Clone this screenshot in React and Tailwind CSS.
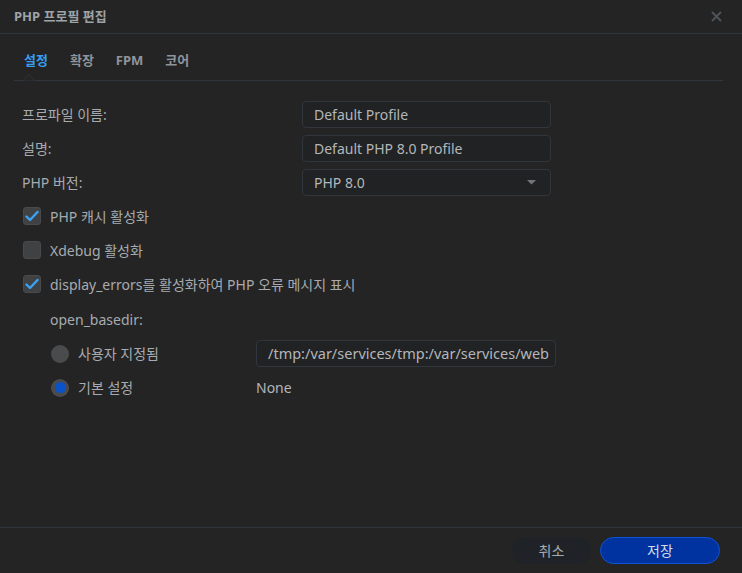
import React from 'react';

const font = { fontFamily: '"Noto Sans", "Noto Sans CJK KR", sans-serif' };

const Check = ({ checked }) => (
  <div className="w-[18px] h-[18px] rounded-[3px] bg-[#404142] border border-[#484a4c] flex items-center justify-center shrink-0">
    {checked && (
      <svg width="14" height="12" viewBox="0 0 14 12">
        <path d="M1.5 6.5 L5 10 L12.5 2" fill="none" stroke="#3ba3f5" strokeWidth="2.4" strokeLinecap="round" strokeLinejoin="round" />
      </svg>
    )}
  </div>
);

const Radio = ({ checked }) => (
  <div className="w-[18px] h-[18px] rounded-full bg-[#4a4b4c] flex items-center justify-center shrink-0">
    {checked && <div className="w-[11px] h-[11px] rounded-full bg-[#0a52c8]" />}
  </div>
);

const Field = ({ children, select }) => (
  <div className="w-[249px] h-[27px] rounded-[4px] border border-[#30363c] bg-[#212223] flex items-center justify-between pl-[11px] pr-[14px] text-[14px] text-[#b3b6ba]">
    <span>{children}</span>
    {select && (
      <svg width="9" height="5" viewBox="0 0 9 5">
        <path d="M0 0 L9 0 L4.5 4.5 Z" fill="#71767c" />
      </svg>
    )}
  </div>
);

export default function App() {
  return (
    <div className="w-[742px] h-[573px] bg-[#242424] flex flex-col" style={font}>
      <div className="h-[34px] border-b border-[#30363c] flex items-center justify-between pl-[14px] pr-[20px] shrink-0">
        <span className="text-[13px] font-bold text-[#9ea3a8]">PHP 프로필 편집</span>
        <svg width="11" height="11" viewBox="0 0 11 11">
          <path d="M1 1 L10 10 M10 1 L1 10" stroke="#4e5358" strokeWidth="2" />
        </svg>
      </div>

      <div className="flex-1 px-[14px]">
        <div className="relative flex gap-[22px] pl-[10px] pt-[16px] pb-[10px] border-b border-[#30363c] mr-[5px] text-[13px] leading-[20px] font-bold text-[#8f959b]">
          <span className="text-[#37a0ee]">설정</span>
          <span>확장</span>
          <span>FPM</span>
          <span>코어</span>
          <svg width="12" height="7" viewBox="0 0 12 7" className="absolute left-[9px] -bottom-[1px]">
            <path d="M0 6.5 L6 0.5 L12 6.5" fill="#242424" stroke="#30363c" strokeWidth="1" />
          </svg>
        </div>

        <div className="pl-[8px] pt-[20px] text-[14px] text-[#a7abb0]">
          <div className="flex flex-col gap-[7px]">
            <div className="flex items-center">
              <span className="w-[280px]">프로파일 이름:</span>
              <Field>Default Profile</Field>
            </div>
            <div className="flex items-center">
              <span className="w-[280px]">설명:</span>
              <Field>Default PHP 8.0 Profile</Field>
            </div>
            <div className="flex items-center">
              <span className="w-[280px]">PHP 버전:</span>
              <Field select>PHP 8.0</Field>
            </div>
          </div>

          <div className="flex flex-col gap-[16px] mt-[11px] pl-[1px]">
            <div className="flex items-center gap-[9px] h-[18px]">
              <Check checked />
              <span>PHP 캐시 활성화</span>
            </div>
            <div className="flex items-center gap-[9px] h-[18px]">
              <Check />
              <span>Xdebug 활성화</span>
            </div>
            <div className="flex items-center gap-[9px] h-[18px]">
              <Check checked />
              <span>display_errors를 활성화하여 PHP 오류 메시지 표시</span>
            </div>
          </div>

          <div className="pl-[28px] mt-[17px]">
            <div className="h-[20px] leading-[20px]">open_basedir:</div>
            <div className="flex flex-col gap-[7px] mt-[10px]">
              <div className="flex items-center h-[27px]">
                <div className="w-[206px] flex items-center gap-[9px] pl-[1px]">
                  <Radio />
                  <span>사용자 지정됨</span>
                </div>
                <div className="w-[300px] h-[27px] rounded-[4px] border border-[#30363c] bg-[#212223] flex items-center pl-[11px] overflow-hidden whitespace-nowrap text-[14.5px] text-[#b3b6ba]">
                  /tmp:/var/services/tmp:/var/services/web
                </div>
              </div>
              <div className="flex items-center h-[27px]">
                <div className="w-[206px] flex items-center gap-[9px] pl-[1px]">
                  <Radio checked />
                  <span>기본 설정</span>
                </div>
                <span className="text-[#b3b6ba]">None</span>
              </div>
            </div>
          </div>
        </div>
      </div>

      <div className="h-[46px] border-t border-[#30363c] flex items-start justify-end gap-[9px] pt-[9px] pr-[22px] shrink-0">
        <button className="w-[79px] h-[27px] rounded-full bg-[#1f2328] text-[14px] text-[#a6abb0]">취소</button>
        <button className="w-[120px] h-[27px] rounded-full bg-[#0033a0] border border-[#0d55d4] text-[14px] text-[#d5dbe6]">저장</button>
      </div>
    </div>
  );
}
